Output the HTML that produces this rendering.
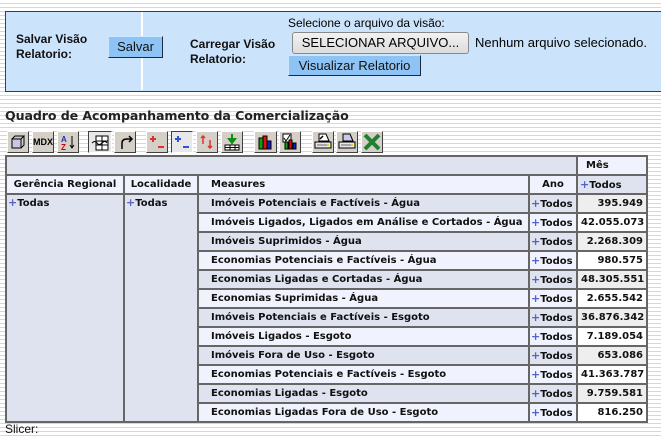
<!DOCTYPE html>
<html><head><meta charset="utf-8"><style>
*{margin:0;padding:0;box-sizing:border-box}
body{width:661px;height:438px;overflow:hidden;position:relative;font-family:"Liberation Sans",Arial,sans-serif;
background:repeating-linear-gradient(to bottom,#fff 0,#fff 3px,#c4dcf0 3px,#c4dcf0 4px);}
.a{position:absolute}
#panel{left:5px;top:11px;width:670px;height:81px;background:#cce4fb;border:1px solid #2f3f55;border-right:none}
#div{left:141px;top:12px;width:2px;height:78px;background:#fff}
.lbl{font-size:12px;font-weight:bold;color:#111;line-height:15px}
.btn{background:#8ec4f5;border:1px solid #1a2a40;border-top-color:#cfe6ff;border-left-color:#cfe6ff;font-size:13px;text-align:center;color:#111}
#sel{left:292px;top:32px;width:177px;height:22px;background:linear-gradient(#f2f2f2,#dcdcdc);border:1px solid #8a8a8a;border-radius:3px;font-size:13px;text-align:center;line-height:20px}
h1{position:absolute;left:5px;top:108px;font-family:"DejaVu Sans",Verdana,sans-serif;font-size:12.6px;font-weight:bold;color:#222;letter-spacing:-0.1px}
.ic{position:absolute;top:131px;width:22px;height:22px;background:#d4d0c8;border:1px solid;border-color:#fff #404040 #404040 #fff}
.ic.p{border-color:#404040 #fff #fff #404040;background:#e8e8e8}
.ic svg{position:absolute;left:0;top:0}
table{position:absolute;left:5px;top:155px;width:641px;table-layout:fixed;border-collapse:collapse;font-family:"DejaVu Sans",Verdana,sans-serif;font-size:10px;font-weight:bold;color:#111}
td{border:2px solid #666;height:19px;padding:0 3px;white-space:nowrap;overflow:hidden;line-height:15px}
.h{background:#dfe3ef}
.w{background:#f0f3fd}
.v1{background:#eeeeee;text-align:right}
.v2{background:#fff;text-align:right}
.pl{color:#5562c8;font-size:11px}
</style></head><body>
<div id="panel" class="a"></div>
<div id="div" class="a"></div>
<div class="a lbl" style="left:16px;top:32px">Salvar Visão<br>Relatorio:</div>
<div class="a btn" style="left:108px;top:36px;width:55px;height:22px;line-height:20px">Salvar</div>
<div class="a lbl" style="left:190px;top:37px">Carregar Visão<br>Relatorio:</div>
<div class="a" style="left:288px;top:16px;font-size:12px">Selecione o arquivo da visão:</div>
<div id="sel" class="a">SELECIONAR ARQUIVO...</div>
<div class="a" style="left:475px;top:35px;font-size:13px">Nenhum arquivo selecionado.</div>
<div class="a btn" style="left:288px;top:55px;width:133px;height:21px;line-height:19px">Visualizar Relatorio</div>
<h1>Quadro de Acompanhamento da Comercialização</h1>

<div class="ic" style="left:7px"><svg width="20" height="20"><path d="M4 7h9v9H4zM4 7l3-3h9l-3 3M13 16l3-3V4" fill="#c8c8e0" stroke="#000"/></svg></div>
<div class="ic" style="left:32px;font:bold 9px 'Liberation Sans';line-height:20px;text-align:center">MDX</div>
<div class="ic" style="left:57px"><svg width="20" height="20"><text x="3" y="10" font-size="8" font-weight="bold" fill="#2030c0" font-family="Liberation Sans">A</text><text x="3" y="18" font-size="8" font-weight="bold" fill="#c00" font-family="Liberation Sans">Z</text><path d="M14 4v12M12 13l2 3 2-3" stroke="#000" fill="none"/></svg></div>
<div class="ic p" style="left:88px;width:24px"><svg width="22" height="20"><rect x="7" y="4" width="12" height="14" fill="#fff" stroke="#000"/><path d="M7 9h12M7 13h12M13 4v14" stroke="#000"/><path d="M3 11q3-3 5 0t5 0t5 0" stroke="#000" fill="none"/></svg></div>
<div class="ic" style="left:114px"><svg width="20" height="20"><path d="M7 17v-6q0-4 5-4h4M14 4l3 3-3 3" stroke="#000" fill="none" stroke-width="1.5"/></svg></div>
<div class="ic" style="left:146px"><svg width="20" height="20"><path d="M6 4v6M3 7h6M11 15h6" stroke="#e03030" stroke-width="2"/></svg></div>
<div class="ic p" style="left:171px"><svg width="20" height="20"><path d="M6 4v6M3 7h6M11 15h6" stroke="#3050e0" stroke-width="2"/></svg></div>
<div class="ic" style="left:196px"><svg width="20" height="20"><path d="M6 12V4M4 6l2-2 2 2M13 8v8M11 14l2 2 2-2" stroke="#e03030" stroke-width="1.5" fill="none"/></svg></div>
<div class="ic" style="left:221px"><svg width="20" height="20"><path d="M10 2v7M7 7l3 4 3-4z" stroke="#109010" fill="#20b020" stroke-width="2"/><path d="M3 13h14v5H3zM3 15.5h14M8 13v5M13 13v5" stroke="#000" fill="#fff"/></svg></div>
<div class="ic" style="left:254px;width:23px"><svg width="21" height="20"><rect x="4" y="6" width="4" height="11" fill="#10a010" stroke="#000"/><rect x="8" y="4" width="4" height="13" fill="#e01010" stroke="#000"/><rect x="12" y="9" width="4" height="8" fill="#1020c0" stroke="#000"/></svg></div>
<div class="ic" style="left:279px"><svg width="20" height="20"><rect x="3" y="2" width="8" height="8" fill="#fff" stroke="#000"/><path d="M4 6l2 3 4-6" stroke="#000" fill="none"/><rect x="5" y="10" width="3" height="7" fill="#10a010" stroke="#000"/><rect x="9" y="8" width="3" height="9" fill="#e01010" stroke="#000"/><rect x="13" y="11" width="3" height="6" fill="#1020c0" stroke="#000"/></svg></div>
<div class="ic" style="left:312px"><svg width="20" height="20"><path d="M6 2h7l3 7H6z" fill="#fff" stroke="#000"/><path d="M2 10h16v6H2z" fill="#e8e8e8" stroke="#000"/><path d="M4 13h10" stroke="#666"/><rect x="14" y="12" width="2" height="2" fill="#e0e000"/><path d="M7 7l3-3" stroke="#000" stroke-width="1.5"/></svg></div>
<div class="ic" style="left:336px"><svg width="20" height="20"><path d="M6 2h7l3 7H6z" fill="#c8c8e8" stroke="#000"/><path d="M2 10h16v6H2z" fill="#e8e8e8" stroke="#000"/><path d="M4 13h10" stroke="#666"/><rect x="14" y="12" width="2" height="2" fill="#e0e000"/></svg></div>
<div class="ic" style="left:361px"><svg width="20" height="20"><path d="M3 3l14 14M17 3L3 17" stroke="#208030" stroke-width="4"/></svg></div>

<table>
<colgroup><col style="width:118px"><col style="width:74px"><col style="width:331px"><col style="width:48px"><col style="width:70px"></colgroup>
<tr><td class="h" colspan="4"></td><td class="w" style="padding-left:8px">Mês</td></tr>
<tr><td class="w" style="text-align:center">Gerência Regional</td><td class="w" style="text-align:center">Localidade</td><td class="w" style="padding-left:12px">Measures</td><td class="w" style="text-align:center">Ano</td><td class="h" style="padding-left:2px"><span class="pl">+</span>Todos</td></tr>
<tr><td class="h" rowspan="12" style="vertical-align:top;padding:0 1px"><span class="pl">+</span>Todas</td><td class="h" rowspan="12" style="vertical-align:top;padding:0 1px"><span class="pl">+</span>Todas</td><td class="h" style="padding-left:12px">Imóveis Potenciais e Factíveis - Água</td><td class="h" style="padding:0 1px"><span class="pl">+</span>Todos</td><td class="v1">395.949</td></tr>
<tr><td class="w" style="padding-left:12px">Imóveis Ligados, Ligados em Análise e Cortados - Água</td><td class="w" style="padding:0 1px"><span class="pl">+</span>Todos</td><td class="v2">42.055.073</td></tr>
<tr><td class="h" style="padding-left:12px">Imóveis Suprimidos - Água</td><td class="h" style="padding:0 1px"><span class="pl">+</span>Todos</td><td class="v1">2.268.309</td></tr>
<tr><td class="w" style="padding-left:12px">Economias Potenciais e Factíveis - Água</td><td class="w" style="padding:0 1px"><span class="pl">+</span>Todos</td><td class="v2">980.575</td></tr>
<tr><td class="h" style="padding-left:12px">Economias Ligadas e Cortadas - Água</td><td class="h" style="padding:0 1px"><span class="pl">+</span>Todos</td><td class="v1">48.305.551</td></tr>
<tr><td class="w" style="padding-left:12px">Economias Suprimidas - Água</td><td class="w" style="padding:0 1px"><span class="pl">+</span>Todos</td><td class="v2">2.655.542</td></tr>
<tr><td class="h" style="padding-left:12px">Imóveis Potenciais e Factíveis - Esgoto</td><td class="h" style="padding:0 1px"><span class="pl">+</span>Todos</td><td class="v1">36.876.342</td></tr>
<tr><td class="w" style="padding-left:12px">Imóveis Ligados - Esgoto</td><td class="w" style="padding:0 1px"><span class="pl">+</span>Todos</td><td class="v2">7.189.054</td></tr>
<tr><td class="h" style="padding-left:12px">Imóveis Fora de Uso - Esgoto</td><td class="h" style="padding:0 1px"><span class="pl">+</span>Todos</td><td class="v1">653.086</td></tr>
<tr><td class="w" style="padding-left:12px">Economias Potenciais e Factíveis - Esgoto</td><td class="w" style="padding:0 1px"><span class="pl">+</span>Todos</td><td class="v2">41.363.787</td></tr>
<tr><td class="h" style="padding-left:12px">Economias Ligadas - Esgoto</td><td class="h" style="padding:0 1px"><span class="pl">+</span>Todos</td><td class="v1">9.759.581</td></tr>
<tr><td class="w" style="padding-left:12px">Economias Ligadas Fora de Uso - Esgoto</td><td class="w" style="padding:0 1px"><span class="pl">+</span>Todos</td><td class="v2">816.250</td></tr>
</table>
<div class="a" style="left:5px;top:422px;font-size:12px;color:#111">Slicer:</div>
</body></html>
